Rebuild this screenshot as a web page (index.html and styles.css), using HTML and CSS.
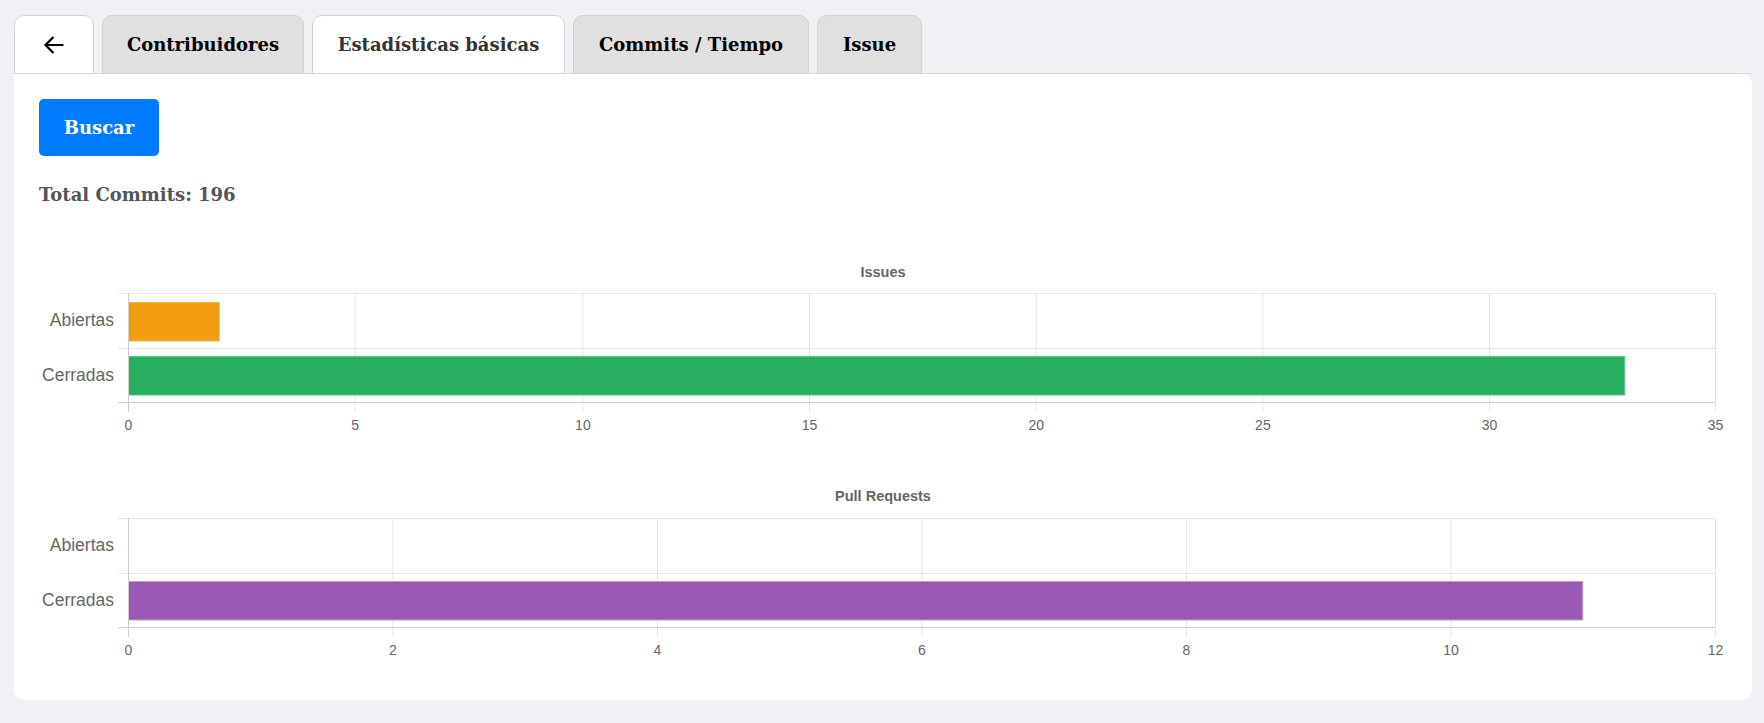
FILE: index.html
```html
<!DOCTYPE html>
<html lang="es">
<head>
<meta charset="utf-8">
<title>Estadísticas básicas</title>
<link rel="stylesheet" href="styles.css">
</head>
<body>
<div class="page">
  <nav class="tabs">
    <button class="tab tab-back" aria-label="Volver">
      <svg width="22" height="20" viewBox="0 0 22 20"><path d="M20.5 10H2.5M10.5 2L2.5 10L10.5 18" fill="none" stroke="#000" stroke-width="2.2"/></svg>
    </button>
    <button class="tab w-contrib">Contribuidores</button>
    <button class="tab tab-active w-stats">Estadísticas básicas</button>
    <button class="tab w-commits">Commits / Tiempo</button>
    <button class="tab w-issue">Issue</button>
  </nav>
  <main class="card">
    <button class="btn-primary">Buscar</button>
    <p class="total">Total Commits: 196</p>
    <div class="charts">
      <svg class="chart" width="1687" height="200" viewBox="0 0 1687 200">
        <text class="chart-title" x="844" y="27" text-anchor="middle">Issues</text>
        <g class="grid">
          <line x1="79" y1="43.5" x2="1676" y2="43.5"/>
          <line x1="79" y1="98.5" x2="1676" y2="98.5"/>
          <line x1="316.2" y1="43" x2="316.2" y2="162"/>
          <line x1="543.9" y1="43" x2="543.9" y2="162"/>
          <line x1="770.5" y1="43" x2="770.5" y2="162"/>
          <line x1="997.2" y1="43" x2="997.2" y2="162"/>
          <line x1="1223.9" y1="43" x2="1223.9" y2="162"/>
          <line x1="1450.6" y1="43" x2="1450.6" y2="162"/>
          <line x1="1676.5" y1="43" x2="1676.5" y2="162"/>
        </g>
        <rect x="89.5" y="52.5" width="90.7" height="38.5" fill="#f39c12" stroke="#f6b04a"/>
        <rect x="89.5" y="106.5" width="1496.3" height="38.5" fill="#27ae60" stroke="#5fc58a"/>
        <g class="axis">
          <line x1="89.5" y1="43" x2="89.5" y2="162"/>
          <line x1="79" y1="152.5" x2="1676" y2="152.5"/>
        </g>
        <text class="cat" x="75" y="76" text-anchor="end">Abiertas</text>
        <text class="cat" x="75" y="131" text-anchor="end">Cerradas</text>
        <g class="tick" text-anchor="middle">
          <text x="89.5" y="180">0</text>
          <text x="316.2" y="180">5</text>
          <text x="543.9" y="180">10</text>
          <text x="770.5" y="180">15</text>
          <text x="997.2" y="180">20</text>
          <text x="1223.9" y="180">25</text>
          <text x="1450.6" y="180">30</text>
          <text x="1676.5" y="180">35</text>
        </g>
      </svg>
      <svg class="chart" width="1687" height="200" viewBox="0 0 1687 200">
        <text class="chart-title" x="844" y="31" text-anchor="middle">Pull Requests</text>
        <g class="grid">
          <line x1="79" y1="48.5" x2="1676" y2="48.5"/>
          <line x1="79" y1="103.5" x2="1676" y2="103.5"/>
          <line x1="354" y1="48" x2="354" y2="167"/>
          <line x1="618.5" y1="48" x2="618.5" y2="167"/>
          <line x1="883" y1="48" x2="883" y2="167"/>
          <line x1="1147.5" y1="48" x2="1147.5" y2="167"/>
          <line x1="1412" y1="48" x2="1412" y2="167"/>
          <line x1="1676.5" y1="48" x2="1676.5" y2="167"/>
        </g>
        <rect x="89.5" y="111.5" width="1454.3" height="38.5" fill="#9b59b6" stroke="#c39bd3"/>
        <g class="axis">
          <line x1="89.5" y1="48" x2="89.5" y2="167"/>
          <line x1="79" y1="157.5" x2="1676" y2="157.5"/>
        </g>
        <text class="cat" x="75" y="81" text-anchor="end">Abiertas</text>
        <text class="cat" x="75" y="136" text-anchor="end">Cerradas</text>
        <g class="tick" text-anchor="middle">
          <text x="89.5" y="185">0</text>
          <text x="354" y="185">2</text>
          <text x="618.5" y="185">4</text>
          <text x="883" y="185">6</text>
          <text x="1147.5" y="185">8</text>
          <text x="1412" y="185">10</text>
          <text x="1676.5" y="185">12</text>
        </g>
      </svg>
    </div>
  </main>
</div>
</body>
</html>
```

FILE: styles.css
```css
* { box-sizing: border-box; }
html, body { margin: 0; padding: 0; }
body {
  background: #f0f1f5;
  font-family: "DejaVu Serif", "Liberation Serif", serif;
}
.page {
  padding: 15px 12px 0 14px;
}
.tabs {
  display: flex;
  gap: 8px;
  border-bottom: 1px solid #d6d6d6;
  height: 59px;
  width: 1738px;
}
.tab {
  height: 59px;
  margin-bottom: -1px;
  border: 1px solid #d2d2d2;
  border-radius: 10px 10px 0 0;
  background: #e0e0e0;
  color: #000;
  font-family: "DejaVu Serif", serif;
  font-weight: bold;
  font-size: 18px;
  display: flex;
  align-items: center;
  justify-content: center;
  padding: 0;
  cursor: pointer;
}
.tab-back { width: 80px; background: #fff; }
.tab-active { background: #fff; color: #333; }
.w-contrib { width: 202px; }
.w-stats { width: 253px; }
.w-commits { width: 236px; }
.w-issue { width: 105px; }
.card {
  background: #fff;
  border-radius: 0 10px 10px 10px;
  padding: 25px 25px 30px 25px;
  width: 1738px;
}
.btn-primary {
  display: block;
  width: 120px;
  height: 57px;
  border: none;
  border-radius: 5px;
  background: #007bff;
  color: #fff;
  font-family: "DejaVu Serif", serif;
  font-weight: bold;
  font-size: 18px;
  padding: 0;
}
.total {
  margin: 27px 0 0 0;
  font-family: "DejaVu Serif", serif;
  font-weight: bold;
  font-size: 18px;
  line-height: 24px;
  color: #555;
}
.charts {
  margin-top: 43px;
  display: flex;
  flex-direction: column;
  gap: 20px;
}
.chart { display: block; }
.chart-title {
  font-family: "Liberation Sans", Arial, sans-serif;
  font-weight: bold;
  font-size: 14.5px;
  fill: #666;
}
.grid line { stroke: #e5e5e5; stroke-width: 1; }
.axis line { stroke: #cfcfcf; stroke-width: 1; }
.cat {
  font-family: "Liberation Sans", Arial, sans-serif;
  font-size: 17.5px;
  fill: #666;
}
.tick text {
  font-family: "Liberation Sans", Arial, sans-serif;
  font-size: 14px;
  fill: #666;
}
```
